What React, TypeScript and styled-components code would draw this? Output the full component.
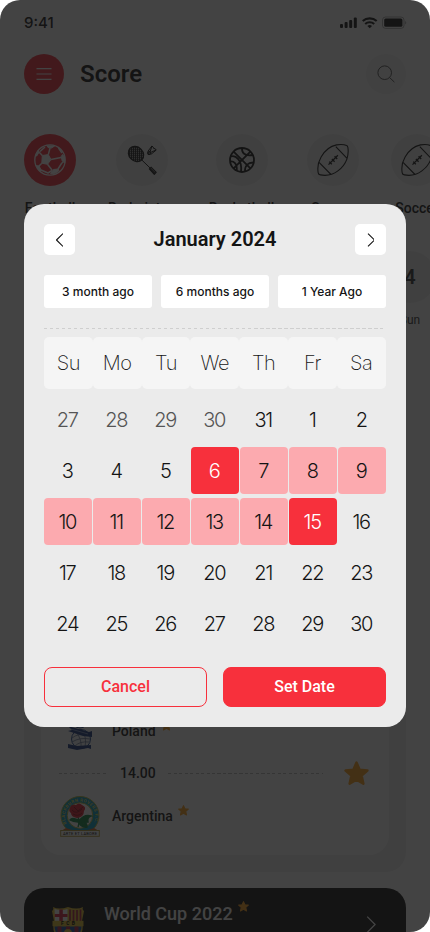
import React from 'react';
import styled, { createGlobalStyle } from 'styled-components';

const GlobalStyle = createGlobalStyle`
  *, *::before, *::after { box-sizing: border-box; }
  body { margin: 0; background: #fff; font-family: Roboto, sans-serif; color: #141414; }
  button { font: inherit; border: 0; padding: 0; margin: 0; color: inherit; cursor: pointer; }
`;

const Phone = styled.div`
  position: relative;
  width: 430px;
  height: 932px;
  overflow: hidden;
  border-radius: 20px;
  background: #fff;
`;

const Screen = styled.div`
  display: flex;
  flex-direction: column;
  width: 430px;
  height: 932px;
  overflow: hidden;
  & > * { flex-shrink: 0; }
`;

const StatusBar = styled.div`
  display: flex;
  align-items: center;
  justify-content: space-between;
  height: 46px;
  padding: 0 23px 0 24px;
  font: 500 15px/46px Inter, sans-serif;
`;

const TopBar = styled.header`
  display: flex;
  align-items: center;
  height: 40px;
  margin: 8px 24px 0;
  gap: 16px;
`;

const RoundButton = styled.button<{ $primary?: boolean }>`
  display: grid;
  place-items: center;
  width: 40px;
  height: 40px;
  border-radius: 50%;
  background: ${p => (p.$primary ? '#f7303c' : '#f3f3f3')};
`;

const PageTitle = styled.h1`
  flex: 1;
  margin: 0;
  font-size: 24px;
  font-weight: 600;
  line-height: 40px;
`;

const Sports = styled.nav`
  display: flex;
  gap: 32px;
  width: 430px;
  height: 84px;
  margin-top: 40px;
  padding-left: 24px;
  overflow: hidden;
`;

const Sport = styled.div<{ $width: number }>`
  display: flex;
  flex: 0 0 ${p => p.$width}px;
  flex-direction: column;
  align-items: center;
  font-size: 14px;
  font-weight: 500;
  line-height: 20px;
  gap: 12px;
  white-space: nowrap;
`;

const Disc = styled.div<{ $active?: boolean }>`
  display: grid;
  flex: none;
  place-items: center;
  width: 52px;
  height: 52px;
  border-radius: 50%;
  font-size: 20px;
  font-weight: 600;
  background: ${p => (p.$active ? '#f7303c' : '#f0f0f0')};
`;

const Dates = styled.div`
  display: flex;
  justify-content: flex-end;
  height: 79px;
  margin: 33px -6px 0 0;
`;

const DateItem = styled.div`
  display: flex;
  flex-direction: column;
  align-items: center;
  gap: 7px;
  font-size: 12px;
  line-height: 20px;
  color: #333;
`;

const League = styled.section`
  height: 472px;
  margin: 70px 24px 0;
  padding: 0 17px 17px;
  display: flex;
  align-items: flex-end;
  border-radius: 20px;
  background: #f0f0f0;
`;

const Match = styled.div`
  display: flex;
  flex-direction: column;
  width: 349px;
  height: 160px;
  padding: 16px 18px;
  border-radius: 20px;
  background: #fff;
`;

const TeamRow = styled.div`
  display: flex;
  align-items: center;
  height: 40px;
  gap: 12px;
`;

const CrestSlot = styled.div`
  display: grid;
  place-items: center;
  width: 41px;
`;

const TeamName = styled.div`
  display: flex;
  gap: 5px;
  font-size: 14px;
  font-weight: 500;
  line-height: 20px;
  svg { margin-top: -1px; }
`;

const KickOff = styled.div`
  display: flex;
  align-items: center;
  height: 45px;
  gap: 12px;
  font-size: 14px;
  font-weight: 500;
  padding: 0 2px 1px 0;
`;

const Dash = styled.div<{ $width: number }>`
  width: ${p => p.$width}px;
  height: 1px;
  background: repeating-linear-gradient(90deg, #bbb 0 3px, transparent 3px 5.5px);
`;

const StarSlot = styled.div`
  display: flex;
  margin-left: auto;
`;

const Tournament = styled.section`
  display: flex;
  height: 73px;
  margin: 16px 24px 0;
  padding: 0 30px 0 26px;
  border-radius: 20px;
  background: #141414;
  color: #fff;
`;

const TournamentCrest = styled.div`
  width: 36px;
  padding-top: 18px;
`;

const TournamentTitle = styled.div`
  display: flex;
  gap: 5px;
  flex: 1;
  padding: 13px 0 0 18px;
  font-size: 18px;
  font-weight: 500;
  line-height: 26px;
`;

const TournamentArrow = styled.div`
  padding-top: 28px;
`;

const Overlay = styled.div`
  position: absolute;
  inset: 0;
  padding: 204px 24px 0;
  background: rgba(20, 20, 20, 0.8);
`;

const Dialog = styled.div`
  display: flex;
  flex-direction: column;
  height: 523px;
  padding: 20px;
  border-radius: 20px;
  background: #ebebeb;
`;

const MonthBar = styled.div`
  display: flex;
  align-items: center;
  justify-content: space-between;
  height: 31px;
`;

const MonthTitle = styled.h2`
  margin: 0;
  font-size: 20px;
  font-weight: 600;
  line-height: 31px;
`;

const ArrowButton = styled.button`
  display: grid;
  place-items: center;
  width: 31px;
  height: 31px;
  border-radius: 5px;
  background: #fff;
`;

const Presets = styled.div`
  display: grid;
  grid-template-columns: repeat(3, 108px);
  gap: 9px;
  margin-top: 20px;
`;

const Preset = styled.button`
  height: 33.4px;
  border-radius: 3px;
  background: #fff;
  font: 450 12px/33px Inter, sans-serif;
`;

const Divider = styled.div`
  height: 1px;
  margin: 19.6px 0 8px;
  background: repeating-linear-gradient(90deg, #cfcfcf 0 3.5px, transparent 3.5px 6px);
`;

const WeekHead = styled.div`
  display: grid;
  grid-template-columns: repeat(7, 48.8px);
`;

const WeekDay = styled.div`
  height: 51.6px;
  border-radius: 5px;
  background: #f5f5f5;
  font: 250 20px/52px Inter, sans-serif;
  letter-spacing: -0.5px;
  text-align: center;
`;

const Days = styled.div`
  display: grid;
  grid-template-columns: repeat(7, 47.6px);
  grid-auto-rows: 47px;
  gap: 4px 1.4px;
  margin-top: 7.9px;
`;

type DayKind = 'muted' | 'plain' | 'range' | 'edge';

const dayBackground = { muted: 'transparent', plain: 'transparent', range: '#fcaaaf', edge: '#f7303c' };
const dayColor = { muted: '#555', plain: '#141414', range: '#141414', edge: '#fff' };

const Day = styled.button<{ $kind: DayKind }>`
  height: 47px;
  padding: 2px 1px 0 0;
  border-radius: 4px;
  background: ${p => dayBackground[p.$kind]};
  color: ${p => dayColor[p.$kind]};
  font: 280 20px/45px Inter, sans-serif;
  letter-spacing: -1.2px;
  text-align: center;
`;

const Actions = styled.div`
  display: grid;
  grid-template-columns: 163px 163px;
  gap: 16px;
  margin-top: auto;
`;

const Action = styled.button<{ $solid?: boolean }>`
  height: 40px;
  padding-bottom: 2px;
  border: 1px solid #f7303c;
  border-radius: 8px;
  background: ${p => (p.$solid ? '#f7303c' : 'transparent')};
  color: ${p => (p.$solid ? '#fff' : '#f7303c')};
  font-size: 16px;
  font-weight: 500;
`;

const StatusIcons = () => (
  <svg width="68" height="14" viewBox="0 0 68 14" fill="#141414">
    <rect x="1" y="8" width="3" height="4" rx="1" />
    <rect x="5.6" y="6" width="3" height="6" rx="1" />
    <rect x="10.2" y="4" width="3" height="8" rx="1" />
    <rect x="14.8" y="1.5" width="3" height="10.5" rx="1" />
    <g fill="none" stroke="#141414" strokeWidth="2.1">
      <path d="M23.7 5.1a10.3 10.3 0 0 1 14 0" />
      <path d="M26.2 8a6.6 6.6 0 0 1 9 0" />
    </g>
    <path d="M28.4 10a3.4 3.4 0 0 1 4.6 0L30.7 12.2Z" />
    <rect x="43.5" y="1" width="21.5" height="11.4" rx="3" fill="none" stroke="#141414" opacity=".35" />
    <rect x="45.2" y="2.6" width="18.2" height="8.2" rx="1.5" />
    <path d="M66.2 5v3.6c1.4-.7 1.4-2.9 0-3.6Z" opacity=".4" />
  </svg>
);

const SoccerBall = () => (
  <svg width="32" height="32" viewBox="0 0 32 32" stroke="#fff" strokeLinejoin="round">
    <circle cx="16" cy="16" r="15.2" fill="#f7303c" strokeWidth="1.3" />
    <path
      d="m8.3 11.5 6-.9 2.700 5-3.500 4.700-5.700-1.100ZM13 1.800l7.500.3-3.200 2-3.300-.6ZM30.500 13l.200 6-2.500-2-1-4.500 1.300-2ZM19.500 25.500l4.500-.5 1 1.500-4.500 3.300-4-.3ZM2.200 21.500l3 .7 2 4-1.500.5ZM4.200 6.500l1 1.500-2.500 4-1 0Z"
      fill="#fff"
      strokeWidth="1"
    />
    <path
      d="M8.3 11.5 5 8M14.3 10.6l1.7-6.5M17 15.6l10-2M13.5 20.3l4.7 6M7.8 19.2 4.5 22.5M24 25l3.5-5.5 1.5-1.5M7 26l7 3 4-2.5M24.5 4l3.5 5M6 7.5l5-4.5"
      fill="none"
      strokeWidth="1.5"
    />
  </svg>
);

const Badminton = () => (
  <svg width="30" height="30" viewBox="0 0 30 30" fill="none" stroke="#141414">
    <defs>
      <pattern id="strings" width="2" height="2" patternUnits="userSpaceOnUse" patternTransform="rotate(45)">
        <path d="M0 .6h2M.6 0v2" strokeWidth="1" stroke="#141414" />
      </pattern>
    </defs>
    <ellipse cx="9" cy="9" rx="8.3" ry="7" transform="rotate(45 9 9)" fill="url(#strings)" strokeWidth="1.2" />
    <path d="m14.6 14.8 8.4 8.1" />
    <path d="m22.5 24 1.6-1.7 5 5-1.8 2Z" strokeWidth="1.2" />
    <path d="m23 23.5 5 5" strokeWidth="1.2" />
    <path d="M21 6.2 24.9 1l1.2 1 .6 1.5 1.5.2 1 1.4-5 4-2.8-.2ZM22 5.6l2 2.7M24.9 1l-2 6.5M29 5l-5.7 2.6" />
    <circle cx="22" cy="8.2" r="1.5" />
  </svg>
);

const Basketball = () => (
  <svg width="26" height="26" viewBox="0 0 26 26" fill="none" stroke="#141414" strokeWidth="1.8">
    <circle cx="13" cy="13" r="12" />
    <path d="m4.6 4.6 16.8 16.8M21.4 4.6 4.6 21.4M13 1c-.3 4.4 2.3 8.5 10.8 7M2 9.5c4.5-1.5 11.5 3.5 10 15.3M1.1 14.5c3.6-.4 7.2 1.4 6.7 9.3M16 24.5c-.3-5.7 2.7-9.3 8.9-9" />
  </svg>
);

const AmericanFootball = () => (
  <svg width="32" height="32" viewBox="0 0 32 32" fill="none" stroke="#141414" strokeWidth="1.1">
    <path d="M19.5.9c4.4-.6 8-.3 10.1.7.9.4 1.1.9 1.3 1.9.5 3.4.4 7.5-1 11.6-1.7 4.6-4.9 8.8-9 11.8-5 3.7-11 5.3-17.5 4-1.5-.3-2-.8-2.2-2.1-.9-5.2.1-11.1 2.9-15.8C7.5 7 13.2 2.2 19.5.9ZM18.8 2.6l11 11.5M1.8 18.2l12.2 12.3" />
    <path d="m11.5 20.6 9.4-9.3M12.2 17.6l2.6 2.7M14.9 15l2.7 2.7M17.6 12.3l2.6 2.7" strokeWidth="1.3" />
  </svg>
);

const Star = ({ size }: { size: number }) => (
  <svg width={size} height={size} viewBox="0 0 24 24" fill="#ff9f1c" stroke="#ff9f1c" strokeWidth="2.4" strokeLinejoin="round">
    <path d="m12 1.5 3 6.8 7.5.8-5.6 4.9 1.7 7.8L12 18l-6.6 3.8L7.1 14 1.5 9.1 9 8.3Z" />
  </svg>
);

const Chevron = ({ left, color = '#141414', height = 14 }: { left?: boolean; color?: string; height?: number }) => (
  <svg width={height * 0.57} height={height} viewBox="0 0 8 14" fill="none" stroke={color} strokeWidth="1.1" strokeLinejoin="round">
    <path d={left ? 'M7 .5.5 7 7 13.5' : 'M1 .5 7.5 7 1 13.5'} />
  </svg>
);

const BirminghamCrest = () => (
  <svg width="26" height="40" viewBox="0 0 26 40">
    <circle cx="13" cy="9" r="8" fill="#dce6f3" stroke="#234a91" />
    <circle cx="14" cy="28" r="9.5" fill="#eef2f8" stroke="#234a91" />
    <path d="M5 27q6-5 16-3M5 31q8-5 18-3M8 35q5-5 14-4M9 21q6 7 5 16M15 19q5 7 3 17" fill="none" stroke="#54678d" strokeWidth=".7" />
    <path d="m1 15 21 6 3-1v6l-9-1L1 20l4-1Z" fill="#193b82" />
    <path d="m1 33 9 2 14-1v4l-3-1-11 2-9-2Z" fill="#193b82" />
    <path d="m4 18 17 5" stroke="#9db1d5" strokeWidth=".7" />
  </svg>
);

const BlackburnCrest = () => (
  <svg width="40" height="41" viewBox="0 0 40 41">
    <defs><path id="ring" d="M6.4 27.5A15.2 15.2 0 1 1 33.6 27.5" /></defs>
    <circle cx="20" cy="19.5" r="19" fill="#079fc5" stroke="#b9b83c" strokeWidth="1" />
    <circle cx="20" cy="19.5" r="12.8" fill="#fff" stroke="#b9b83c" />
    <text fontSize="4.4" fontWeight="700" fill="#e2dc4e" fontFamily="Roboto" textLength="60"><textPath href="#ring">BLACKBURN ROVERS F.C.</textPath></text>
    <path d="M18 21q2 5 0 10M19 25q5-7 12-5-4 1-3 6-5 0-9 2M18 24q-6-3-8 0 3 2 8 2M20 29q7-5 7 2-3 1-7-2" fill="#108542" stroke="#108542" strokeWidth="1.4" />
    <path d="M10 12q1-4 6-3 3-3 6 0 5 2 2 6 0 6-7 7-6-1-6-5-3-2-1-5Z" fill="#e11e30" />
    <path d="M12 14q4 5 10-1M14 11l4 4 5-4M13 18q5 3 9-1" fill="none" stroke="#840d1c" strokeWidth=".8" />
    <path d="m1 35 5-3 6 2h16l6-2 5 3Z" fill="#dc642c" />
    <rect x=".7" y="34.5" width="38.6" height="5.8" fill="#fff" stroke="#b29c39" />
    <text x="20" y="39" fontSize="4" fontFamily="Roboto" textAnchor="middle" textLength="34">ARTE ET LABORE</text>
  </svg>
);

const BarcelonaCrest = () => (
  <svg width="36" height="36" viewBox="0 0 36 36">
    <path d="M2 5q2-1 1-4 6 3 15 0 9 3 15 0-1 3 1 4l-2 10q4 17-14 21Q0 32 4 15Z" fill="#e6c02d" />
    <path d="M4.5 3q7 2 13 0v12H5Z" fill="#fff" />
    <path d="M9.3 3.5h3.5V8h4.7v3h-4.7v4H9.3v-4H4.8V8h4.5Z" fill="#db2143" />
    <path d="M20 3.5V15M23.5 4v11M27 4v11M30.5 3.5V15" stroke="#b42242" strokeWidth="1.7" />
    <rect x="2.5" y="14.8" width="31" height="5.4" fill="#e6c02d" />
    <text x="18" y="19.3" fontSize="5" fontWeight="700" fontFamily="Roboto" textAnchor="middle" textLength="14">FCB</text>
    <path d="M4.5 20.5h27q0 10-13.5 14Q4.5 30 4.5 20.5Z" fill="#174e9e" />
    <path d="M9.5 20.5v10M18 20.5V34M26.5 20.5v10" stroke="#b42242" strokeWidth="4" />
    <circle cx="18" cy="27" r="4" fill="#e6c02d" />
  </svg>
);

const sports = [
  { name: 'Football', width: 52, icon: <SoccerBall />, active: true },
  { name: 'Badminton', width: 68, icon: <Badminton /> },
  { name: 'Basketball', width: 67, icon: <Basketball /> },
  { name: 'Soccer', width: 52, icon: <AmericanFootball /> },
  { name: 'Soccer', width: 52, icon: <AmericanFootball /> },
];

const days = [27, 28, 29, 30, 31, ...Array.from({ length: 30 }, (_, i) => i + 1)];

const dayKind = (index: number, day: number): DayKind => {
  if (index < 4) return 'muted';
  if (index > 4 && (day === 6 || day === 15)) return 'edge';
  if (index > 4 && day > 6 && day < 15) return 'range';
  return 'plain';
};

export default function App() {
  return (
    <>
      <GlobalStyle />
      <Phone>
        <Screen>
          <StatusBar>9:41<StatusIcons /></StatusBar>
          <TopBar>
            <RoundButton $primary aria-label="Menu">
              <svg width="16" height="12" viewBox="0 0 16 12" stroke="#fff" strokeWidth="1.2">
                <path d="M.5.7h15M.5 6h15M.5 11.3h15" />
              </svg>
            </RoundButton>
            <PageTitle>Score</PageTitle>
            <RoundButton aria-label="Search">
              <svg width="18" height="18" viewBox="0 0 18 18" fill="none" stroke="#555" strokeWidth="1">
                <circle cx="7.7" cy="7.7" r="6.8" /><path d="m12.6 12.6 4.8 4.5" />
              </svg>
            </RoundButton>
          </TopBar>
          <Sports>
            {sports.map((sport, i) => (
              <Sport key={i} $width={sport.width}>
                <Disc $active={sport.active}>{sport.icon}</Disc>
                {sport.name}
              </Sport>
            ))}
          </Sports>
          <Dates>
            <DateItem><Disc>4</Disc>Sun</DateItem>
          </Dates>
          <League>
            <Match>
              <TeamRow>
                <CrestSlot><BirminghamCrest /></CrestSlot>
                <TeamName>Poland<Star size={11} /></TeamName>
              </TeamRow>
              <KickOff>
                <Dash $width={49} />14.00<Dash $width={155} />
                <StarSlot><Star size={25} /></StarSlot>
              </KickOff>
              <TeamRow>
                <CrestSlot><BlackburnCrest /></CrestSlot>
                <TeamName>Argentina<Star size={11} /></TeamName>
              </TeamRow>
            </Match>
          </League>
          <Tournament>
            <TournamentCrest><BarcelonaCrest /></TournamentCrest>
            <TournamentTitle>World Cup 2022<Star size={11} /></TournamentTitle>
            <TournamentArrow><Chevron color="#fff" height={17} /></TournamentArrow>
          </Tournament>
        </Screen>
        <Overlay>
          <Dialog role="dialog" aria-label="Select dates">
            <MonthBar>
              <ArrowButton aria-label="Previous month"><Chevron left /></ArrowButton>
              <MonthTitle>January 2024</MonthTitle>
              <ArrowButton aria-label="Next month"><Chevron /></ArrowButton>
            </MonthBar>
            <Presets>
              <Preset>3 month ago</Preset>
              <Preset>6 months ago</Preset>
              <Preset>1 Year Ago</Preset>
            </Presets>
            <Divider />
            <WeekHead>
              {['Su', 'Mo', 'Tu', 'We', 'Th', 'Fr', 'Sa'].map(d => <WeekDay key={d}>{d}</WeekDay>)}
            </WeekHead>
            <Days>
              {days.map((day, i) => <Day key={i} $kind={dayKind(i, day)}>{day}</Day>)}
            </Days>
            <Actions>
              <Action>Cancel</Action>
              <Action $solid>Set Date</Action>
            </Actions>
          </Dialog>
        </Overlay>
      </Phone>
    </>
  );
}
